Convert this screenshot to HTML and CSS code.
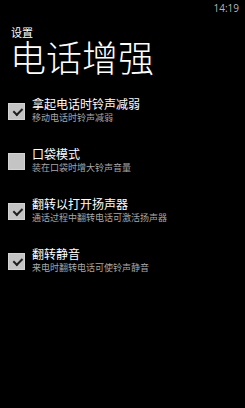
FILE: index.html
```html
<!DOCTYPE html>
<html lang="zh-cn">
<head>
    <meta charset="UTF-8">
    <meta name="viewport" content="width=device-width, initial-scale=1.0">
    <title>电话增强</title>
    <link rel="stylesheet" href="styles.css">
</head>
<body>
    <div class="status-bar">
        <span class="clock">14:19</span>
    </div>
    <header>
        <p class="app-name">设置</p>
        <h1>电话增强</h1>
    </header>
    <ul class="options">
        <li class="option">
            <span class="checkbox checked"></span>
            <div class="option-text">
                <p class="option-title">拿起电话时铃声减弱</p>
                <p class="option-desc">移动电话时铃声减弱</p>
            </div>
        </li>
        <li class="option">
            <span class="checkbox"></span>
            <div class="option-text">
                <p class="option-title">口袋模式</p>
                <p class="option-desc">装在口袋时增大铃声音量</p>
            </div>
        </li>
        <li class="option">
            <span class="checkbox checked"></span>
            <div class="option-text">
                <p class="option-title">翻转以打开扬声器</p>
                <p class="option-desc">通话过程中翻转电话可激活扬声器</p>
            </div>
        </li>
        <li class="option">
            <span class="checkbox checked"></span>
            <div class="option-text">
                <p class="option-title">翻转静音</p>
                <p class="option-desc">来电时翻转电话可使铃声静音</p>
            </div>
        </li>
    </ul>
</body>
</html>
```
FILE: styles.css
```css
body {
    font-family: "Liberation Sans", "Noto Sans CJK SC", sans-serif;
    margin: 0;
    padding: 0;
    background-color: #000;
    color: #fff;
}
p, h1, ul {
    margin: 0;
    padding: 0;
}
.status-bar {
    display: flex;
    justify-content: flex-end;
    height: 16px;
    padding-right: 6px;
}
.clock {
    font-family: "Open Sans", sans-serif;
    font-size: 10px;
    line-height: 16px;
    color: #b5b5b5;
}
header {
    padding: 12px 0 0 11px;
}
.app-name {
    font-size: 11px;
    line-height: 11px;
}
h1 {
    font-size: 36px;
    font-weight: 300;
    line-height: 34px;
    margin: 4px 0 0 -1px;
}
.options {
    list-style: none;
    margin-top: 9px;
}
.option {
    display: flex;
    align-items: center;
    gap: 7px;
    padding-left: 8px;
    height: 50px;
}
.checkbox {
    width: 17px;
    height: 17px;
    box-sizing: border-box;
    background-color: #c4c4c4;
    border: 1px solid #d4d4d4;
    position: relative;
}
.checkbox.checked::after {
    content: "";
    position: absolute;
    left: 3px;
    top: 1px;
    width: 7px;
    height: 4px;
    border-left: 2px solid #1e1e1e;
    border-bottom: 2px solid #1e1e1e;
    transform: rotate(-45deg) translate(-1px, 3px);
}
.option-title {
    font-size: 12px;
    line-height: 13px;
}
.option-desc {
    font-size: 9px;
    line-height: 11px;
    margin-top: 1px;
    color: #a8a8a8;
}
```
